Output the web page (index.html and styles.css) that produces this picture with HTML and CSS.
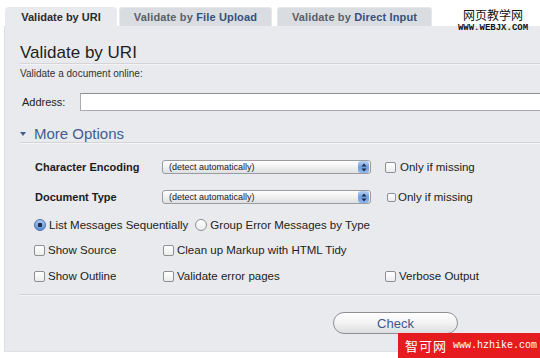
FILE: index.html
```html
<!DOCTYPE html>
<html>
<head>
<meta charset="utf-8">
<link rel="stylesheet" href="styles.css">
</head>
<body>
<div class="page">
  <div class="tabs">
    <div class="tab active">Validate by URI</div>
    <div class="tab tab2">Validate by <span class="hl">File Upload</span></div>
    <div class="tab tab3">Validate by <span class="hl">Direct Input</span></div>
  </div>
  <div class="panel">
    <h1 class="title">Validate by URI</h1>
    <p class="desc">Validate a document online:</p>
    <div class="address">
      <label class="addr-label">Address:</label>
      <div class="addr-input"></div>
    </div>
    <div class="more"><span class="tri"></span>More Options</div>
    <div class="options">
      <div class="row row1">
        <span class="opt-label">Character Encoding</span>
        <div class="select"><span class="sel-text">(detect automatically)</span><span class="stepper"><svg width="6" height="9" viewBox="0 0 6 9"><path d="M3 0.5 L5.5 3.5 L0.5 3.5 Z M3 8.5 L5.5 5.5 L0.5 5.5 Z" fill="#1d2a44"/></svg></span></div>
        <span class="cb cb-a"></span><span class="cb-text">Only if missing</span>
      </div>
      <div class="row row2">
        <span class="opt-label">Document Type</span>
        <div class="select"><span class="sel-text">(detect automatically)</span><span class="stepper"><svg width="6" height="9" viewBox="0 0 6 9"><path d="M3 0.5 L5.5 3.5 L0.5 3.5 Z M3 8.5 L5.5 5.5 L0.5 5.5 Z" fill="#1d2a44"/></svg></span></div>
        <span class="cb cb-small"></span><span class="cb-text2">Only if missing</span>
      </div>
      <div class="row row3">
        <span class="radio on"></span><span class="r-text">List Messages Sequentially</span>
        <span class="radio r2"></span><span class="r-text">Group Error Messages by Type</span>
      </div>
      <div class="grid row4">
        <span class="item"><span class="cb"></span><span class="i-text">Show Source</span></span>
        <span class="item"><span class="cb"></span><span class="i-text">Clean up Markup with HTML Tidy</span></span>
        <span class="item"></span>
      </div>
      <div class="grid row5">
        <span class="item"><span class="cb"></span><span class="i-text">Show Outline</span></span>
        <span class="item"><span class="cb"></span><span class="i-text">Validate error pages</span></span>
        <span class="item"><span class="cb"></span><span class="i-text">Verbose Output</span></span>
      </div>
    </div>
    <div class="sep"></div>
    <div class="btn-row"><button class="check">Check</button></div>
  </div>
  <div class="wm-top">
    <div class="wm-cn">网页教学网</div>
    <div class="wm-en">WWW.WEBJX.COM</div>
  </div>
  <div class="wm-red"><span class="wm-red-cn">智可网</span><span class="wm-red-en">www.hzhike.com</span></div>
</div>
</body>
</html>
```
FILE: styles.css
```css
html, body {
  margin: 0;
  padding: 0;
  background: #ffffff;
}
body {
  font-family: "Liberation Sans", Arial, sans-serif;
  color: #222;
}
.page {
  position: relative;
  width: 540px;
  height: 358px;
  overflow: hidden;
}
.tabs {
  display: flex;
  padding: 7px 0 0 5px;
  height: 19px;
}
.tab {
  height: 19px;
  line-height: 20px;
  font-size: 11px;
  font-weight: bold;
  color: #5b5f66;
  background: #d9dce1;
  border-radius: 4px 4px 0 0;
  box-sizing: border-box;
  text-align: center;
  box-shadow: inset 0 1px 0 #e6e8eb, inset 1px 0 0 #e6e8eb, inset -1px 0 0 #e6e8eb;
}
.tab .hl {
  color: #34507e;
}
.tab.active {
  background: #e9eaed;
  color: #2c2c2c;
  width: 112px;
  box-shadow: none;
}
.tab2 {
  margin-left: 2px;
  width: 153px;
  letter-spacing: 0.15px;
}
.tab3 {
  margin-left: 5px;
  width: 155px;
  letter-spacing: 0.15px;
}
.panel {
  margin-left: 4px;
  height: 326px;
  background: #e9eaed;
  border-left: 1px solid #dcdde1;
  border-bottom: 1px solid #dfe0e3;
  padding-left: 15px;
  box-sizing: border-box;
}
.title {
  margin: 0;
  padding-top: 17px;
  font-size: 17px;
  line-height: 20px;
  font-weight: normal;
  color: #1e1e1e;
  border-bottom: 1px solid #d3d5d9;
  box-shadow: 0 1px 0 #f4f4f6;
}
.desc {
  margin: 0;
  font-size: 10px;
  line-height: 20px;
  color: #333;
}
.address {
  display: flex;
  align-items: center;
  margin-top: 9px;
  height: 18px;
}
.addr-label {
  margin-left: 2px;
  width: 58px;
  font-size: 11px;
  color: #222;
}
.addr-input {
  flex: 1;
  height: 18px;
  box-sizing: border-box;
  background: #fff;
  border: 1px solid #a9abaf;
  border-top-color: #8d8f93;
  border-right: none;
}
.more {
  display: flex;
  align-items: center;
  margin-top: 13px;
  height: 18px;
  font-size: 15px;
  color: #3d5f92;
  border-bottom: 1px solid #d3d5d9;
  box-shadow: 0 1px 0 #f4f4f6;
}
.tri {
  width: 0;
  height: 0;
  border-left: 3.5px solid transparent;
  border-right: 3.5px solid transparent;
  border-top: 4px solid #3d5f92;
  margin: 1px 8px 0 0;
}
.options {
  padding-left: 14px;
}
.row {
  display: flex;
  align-items: center;
  height: 14px;
  font-size: 11.5px;
  color: #222;
}
.row1 { margin-top: 17px; }
.row2 { margin-top: 16px; }
.row3 { margin-top: 14px; }
.opt-label {
  width: 127px;
  padding-left: 1px;
  font-weight: bold;
  font-size: 11px;
  color: #1c1c1c;
}
.select {
  position: relative;
  display: flex;
  align-items: center;
  width: 209px;
  height: 14px;
  box-sizing: border-box;
  border: 1px solid #9b9ca0;
  border-radius: 3px;
  background: linear-gradient(#ffffff, #f1f1f1 50%, #dedfe1);
}
.sel-text {
  flex: 1;
  padding-left: 6px;
  font-size: 9px;
  color: #1a1a1a;
}
.stepper {
  display: flex;
  align-items: center;
  justify-content: center;
  width: 11px;
  height: 12px;
  margin-right: 1px;
  border-radius: 3px;
  background: linear-gradient(#b9d3f3, #6f9fe0 50%, #8fb6ec);
}
.cb {
  display: inline-block;
  width: 11px;
  height: 11px;
  box-sizing: border-box;
  border: 1px solid #8e8f93;
  border-radius: 2px;
  background: linear-gradient(#ffffff, #ececee);
}
.cb-a {
  margin-left: 14px;
}
.cb-text {
  margin-left: 4px;
  font-size: 11.5px;
  color: #222;
}
.cb-small {
  margin-left: 16px;
  width: 9px;
  height: 9px;
}
.cb-text2 {
  margin-left: 2px;
  font-size: 11.5px;
  color: #222;
}
.radio {
  display: inline-block;
  width: 12px;
  height: 12px;
  box-sizing: border-box;
  border: 1px solid #8e8f93;
  border-radius: 50%;
  background: linear-gradient(#ffffff, #ececee);
}
.radio.on {
  border-color: #4a6fa8;
  background: radial-gradient(circle, #1e2c44 0, #1e2c44 2px, transparent 2.5px), linear-gradient(#a8c8f0, #5b8fd8);
}
.radio.r2 {
  margin-left: 7px;
}
.r-text {
  margin-left: 3px;
  font-size: 11.5px;
  color: #222;
}
.grid {
  display: grid;
  grid-template-columns: 129px 222px auto;
  align-items: center;
  height: 14px;
  font-size: 11.5px;
  color: #222;
}
.row4 { margin-top: 11px; }
.row5 { margin-top: 12px; }
.item {
  display: flex;
  align-items: center;
}
.i-text {
  margin-left: 3px;
}
.sep {
  margin-top: 11px;
  height: 0;
  border-bottom: 1px solid #cfd1d5;
  box-shadow: 0 1px 0 #f4f4f6;
}
.btn-row {
  display: flex;
  padding-left: 313px;
  margin-top: 17px;
}
.check {
  width: 125px;
  height: 22px;
  border: 1px solid #8e9094;
  border-radius: 11px;
  background: linear-gradient(#ffffff, #f3f3f3 50%, #dcdddf);
  font-family: "Liberation Sans", Arial, sans-serif;
  font-size: 13px;
  color: #3c5a88;
  padding: 0;
}
.wm-top {
  position: absolute;
  left: 457px;
  top: 7px;
  width: 72px;
  text-align: center;
  color: #111;
}
.wm-cn {
  font-family: "Noto Sans CJK SC", sans-serif;
  font-size: 12px;
  line-height: 16px;
}
.wm-en {
  font-family: "Liberation Mono", monospace;
  font-size: 9px;
  font-weight: bold;
  line-height: 8px;
  margin-top: 1px;
}
.wm-red {
  position: absolute;
  left: 398px;
  top: 333px;
  width: 142px;
  height: 25px;
  background: #e51b1f;
  color: #fff;
  display: flex;
  align-items: center;
}
.wm-red-cn {
  margin-left: 7px;
  font-family: "Noto Sans CJK SC", sans-serif;
  font-size: 13px;
  letter-spacing: 1px;
}
.wm-red-en {
  margin-left: 6px;
  font-family: "Liberation Mono", monospace;
  font-size: 10px;
}
```
